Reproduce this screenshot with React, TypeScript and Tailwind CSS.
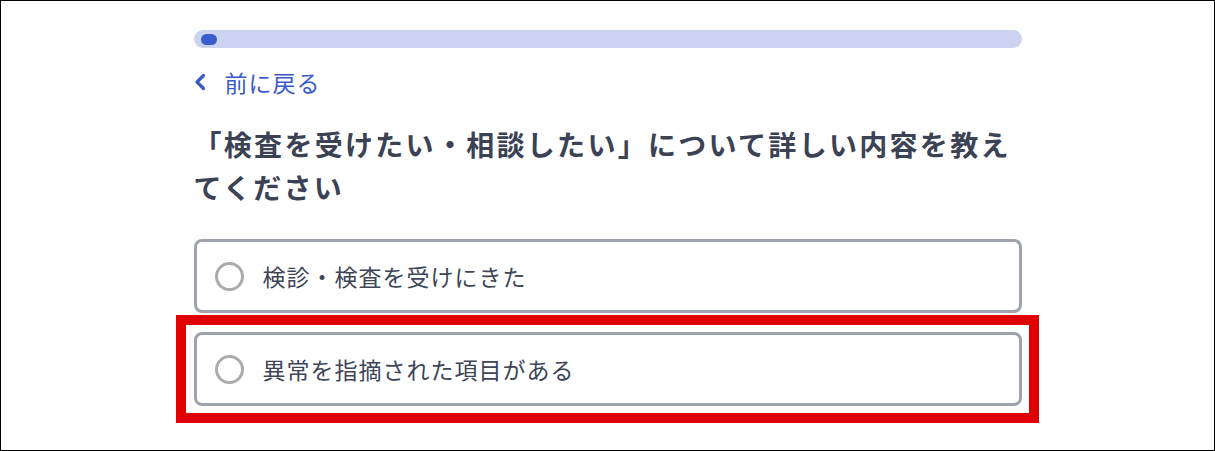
import { useState } from "react";

// options shown under the question
const OPTIONS = [
  { id: "checkup", label: "検診・検査を受けにきた" },
  { id: "abnormal", label: "異常を指摘された項目がある", highlight: true },
];

const ChevronLeft = () => (
  <svg width="12" height="18" viewBox="0 0 12 18" fill="none">
    <path
      d="M9.5 2.5 L3 9 L9.5 15.5"
      stroke="#3a5bc7"
      strokeWidth="3.2"
      strokeLinecap="round"
      strokeLinejoin="round"
    />
  </svg>
);

export default function App() {
  const [selected, setSelected] = useState<string | null>(null);

  return (
    <div
      className="w-[1215px] h-[451px] border border-black bg-white overflow-hidden"
      style={{ fontFamily: '"Noto Sans CJK JP", "Noto Sans", sans-serif' }}
    >
      <div className="w-[828px] mx-auto pt-[29px] flex flex-col">
        {/* progress */}
        <div className="h-[18px] rounded-full bg-[#cbd3f1] flex items-center pl-[7px]">
          <div className="w-4 h-[11px] rounded-full bg-[#3b5bd1]" />
        </div>

        {/* back */}
        <button className="mt-[18px] h-8 flex items-center gap-[19px] text-[#3a5bc7] text-[23px] tracking-[1px] self-start">
          <ChevronLeft />
          <span className="leading-8">前に戻る</span>
        </button>

        {/* question */}
        <h1 className="mt-[25px] text-[28px] leading-[43px] font-bold tracking-[2.3px] text-[#3b4253]">
          「検査を受けたい・相談したい」について詳しい内容を教えてください
        </h1>

        <div className="mt-[30px] flex flex-col gap-[19px]">
          {OPTIONS.map((opt) => (
            <div key={opt.id} className="relative">
              <button
                onClick={() => setSelected(opt.id)}
                className="w-full h-[74px] border-[3px] border-[#9fa3ab] rounded-lg bg-white flex items-center pl-[18px] gap-[19px] text-left"
              >
                <span
                  className={`w-[29px] h-[29px] rounded-full border-[3px] shrink-0 ${
                    selected === opt.id ? "border-[#3b5bd1]" : "border-[#ababab]"
                  }`}
                />
                <span className="text-[23px] tracking-[1px] text-[#3d4556]">
                  {opt.label}
                </span>
              </button>
              {opt.highlight && (
                <div className="absolute -left-[18px] -right-[17px] -top-[17px] -bottom-[17px] border-[10px] border-[#e00000] pointer-events-none" />
              )}
            </div>
          ))}
        </div>
      </div>
    </div>
  );
}
